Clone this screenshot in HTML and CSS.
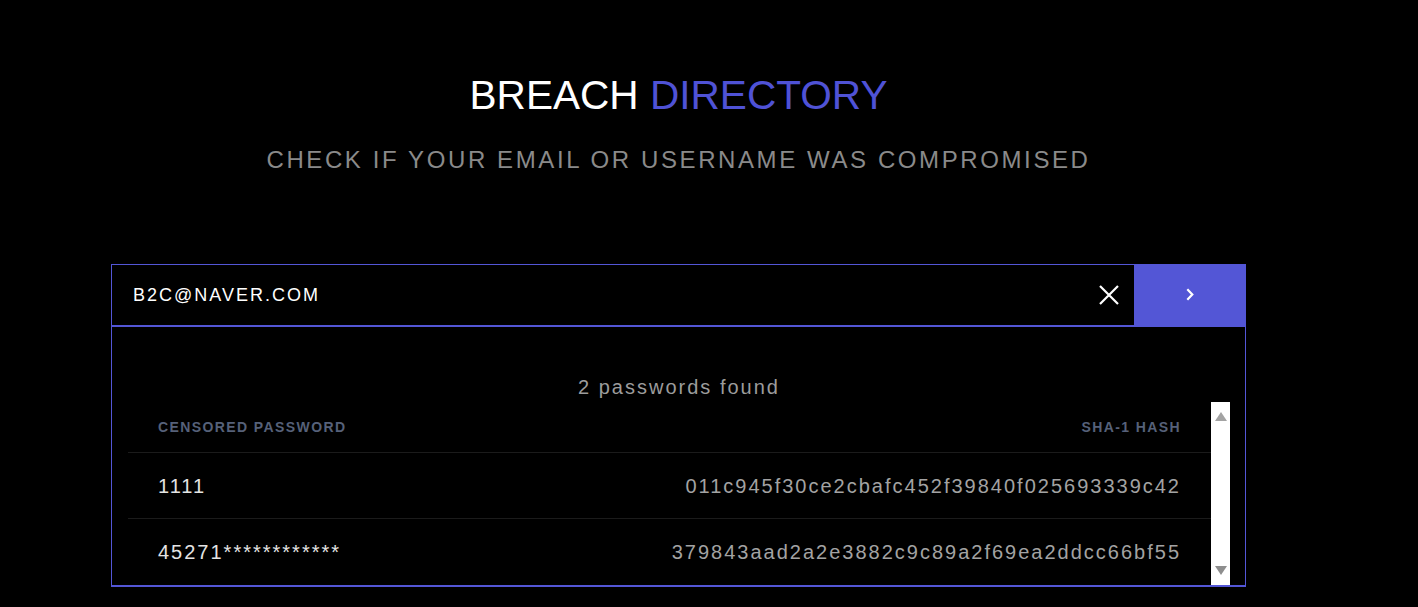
FILE: index.html
```html
<!DOCTYPE html>
<html lang="en">
<head>
<meta charset="utf-8">
<title>Breach Directory</title>
<link rel="stylesheet" href="styles.css">
</head>
<body>
<main class="page">
  <h1 class="title">BREACH <span class="accent">DIRECTORY</span></h1>
  <h2 class="subtitle">CHECK IF YOUR EMAIL OR USERNAME WAS COMPROMISED</h2>

  <form class="search">
    <div class="field">
      <input class="query" type="text" value="B2C@NAVER.COM" aria-label="Email or username">
      <button class="clear" type="button" aria-label="Clear">
        <svg width="20" height="20" viewBox="0 0 20 20"><path d="M1 1L19 19M19 1L1 19" stroke="#fff" stroke-width="2.2" fill="none"/></svg>
      </button>
    </div>
    <button class="go" type="submit" aria-label="Search">
      <svg width="8" height="13" viewBox="0 0 8 13"><path d="M1.3 1.3L6.3 6.5L1.3 11.7" stroke="#fff" stroke-width="2.2" fill="none"/></svg>
    </button>
  </form>

  <section class="results">
    <p class="count">2 passwords found</p>
    <div class="table-area">
      <div class="table">
        <div class="row head">
          <span>CENSORED PASSWORD</span>
          <span>SHA-1 HASH</span>
        </div>
        <div class="row">
          <span class="pw">1111</span>
          <span class="hash">011c945f30ce2cbafc452f39840f025693339c42</span>
        </div>
        <div class="row">
          <span class="pw">45271************</span>
          <span class="hash">379843aad2a2e3882c9c89a2f69ea2ddcc66bf55</span>
        </div>
      </div>
      <div class="scrollbar">
        <span class="arrow up"></span>
        <span class="arrow down"></span>
      </div>
    </div>
  </section>
</main>
</body>
</html>
```
FILE: styles.css
```css
* { box-sizing: border-box; }

body {
  margin: 0;
  background: #000;
  font-family: "Liberation Sans", Arial, sans-serif;
}

.page {
  width: 1135px;
  margin-left: 111px;
  padding-top: 71px;
}

.title {
  margin: 0;
  font-size: 40.6px;
  line-height: 48px;
  font-weight: 400;
  text-align: center;
  color: #fff;
}

.title .accent { color: #4f52d6; }

.subtitle {
  margin: 26px 0 0;
  font-size: 24px;
  line-height: 30px;
  font-weight: 400;
  letter-spacing: 2.6px;
  text-align: center;
  color: #8a8a8a;
}

.search {
  display: flex;
  height: 63px;
  margin: 89px 0 0;
}

.field {
  flex: 1;
  display: flex;
  align-items: center;
  border: 1px solid #5356d6;
  border-right: 0;
  border-bottom-width: 2px;
}

.query {
  flex: 1;
  min-width: 0;
  background: transparent;
  border: 0;
  outline: none;
  padding: 0 0 0 21px;
  font-family: "Liberation Sans", Arial, sans-serif;
  font-size: 18px;
  letter-spacing: 2px;
  color: #fff;
}

.clear {
  width: 20px;
  height: 20px;
  margin-right: 15px;
  padding: 0;
  border: 0;
  background: none;
  display: flex;
}

.go {
  width: 112px;
  border: 0;
  padding: 0;
  background: #5356d6;
  display: flex;
  align-items: center;
  justify-content: center;
}

.go svg { margin-top: -3px; }

.results {
  height: 260px;
  border: 1px solid #5356d6;
  border-top: 0;
  border-bottom-width: 2px;
  padding: 48px 15px 0 16px;
}

.count {
  margin: 0;
  font-size: 20px;
  line-height: 24px;
  letter-spacing: 2px;
  text-align: center;
  color: #9c9c9c;
}

.table-area {
  display: flex;
  height: 183px;
  margin-top: 3px;
}

.table { flex: 1; }

.row {
  display: flex;
  justify-content: space-between;
  align-items: center;
  height: 66px;
  padding: 0 30px;
  border-bottom: 1px solid #1b1b1b;
  font-size: 20px;
  line-height: 24px;
  letter-spacing: 2px;
}

.row:last-child { border-bottom: 0; }

.row.head {
  height: 51px;
  font-size: 14px;
  line-height: 16px;
  font-weight: 700;
  letter-spacing: 1.4px;
  color: #566179;
}

.pw { color: #e4e4e4; }
.hash { color: #a3a3a3; }

.scrollbar {
  width: 19px;
  background: #fff;
  display: flex;
  flex-direction: column;
  justify-content: space-between;
  align-items: center;
  padding: 10px 0;
}

.arrow {
  width: 0;
  height: 0;
  border-left: 6.5px solid transparent;
  border-right: 6.5px solid transparent;
}

.arrow.up { border-bottom: 9px solid #a3a3a3; }
.arrow.down { border-top: 9px solid #8e8e8e; }
```
